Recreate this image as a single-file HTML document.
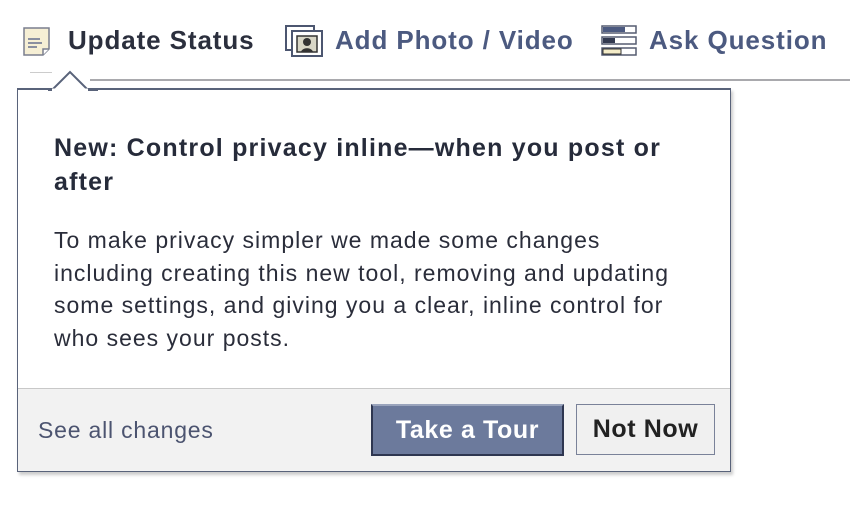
<!DOCTYPE html>
<html><head><style>
body{margin:0;width:850px;height:509px;background:#fff;position:relative;overflow:hidden;font-family:"Liberation Sans",Arial,sans-serif;}
.t{position:absolute;font-weight:bold;font-size:26px;top:25px;white-space:nowrap;letter-spacing:0.9px}
.pop{position:absolute;left:17px;top:88px;width:714px;height:384px;border:1px solid #59637a;border-top:2px solid #59637a;background:#fff;box-shadow:2px 3px 3px #ccc;box-sizing:border-box}
.foot{position:absolute;left:0;right:0;bottom:0;height:82px;background:#f2f2f2;border-top:1px solid #c8c8c8}
.h{position:absolute;left:36px;top:41px;font-weight:bold;font-size:25px;line-height:34px;color:#262b3a;white-space:nowrap;letter-spacing:1.2px}
.b{position:absolute;left:36px;top:134px;font-size:23px;line-height:32.5px;color:#2a2d3a;white-space:nowrap;letter-spacing:1px}
.btn{position:absolute;font-weight:bold;font-size:25px;text-align:center;box-sizing:border-box;letter-spacing:0.6px}
</style></head><body>
<svg style="position:absolute;left:22px;top:25px" width="32" height="33" viewBox="0 0 32 33">
<path d="M2 3h25v21l-6 6H2z" fill="#f6efd5" stroke="#7a7f8e" stroke-width="1.5"/>
<path d="M6 14h12M6 18h14M6 22h9" stroke="#8a8fa0" stroke-width="2"/>
<path d="M21 30v-6h6" fill="#fff" stroke="#7a7f8e" stroke-width="1.5"/>
</svg>
<div class="t" style="left:68px;color:#2b2f3d">Update Status</div>
<svg style="position:absolute;left:284px;top:24px" width="40" height="34" viewBox="0 0 40 34">
<rect x="2" y="2" width="28" height="24" fill="#fff" stroke="#4c5670" stroke-width="2"/>
<rect x="8" y="7" width="30" height="25" fill="#fff" stroke="#4c5670" stroke-width="2"/>
<rect x="13" y="12" width="20" height="16" fill="#d8d6c6" stroke="#333" stroke-width="1.5"/>
<circle cx="23" cy="18" r="4" fill="#333"/><path d="M17 28c1-5 11-5 12 0z" fill="#333"/>
</svg>
<div class="t" style="left:335px;color:#4c5a80">Add Photo / Video</div>
<svg style="position:absolute;left:601px;top:24px" width="36" height="34" viewBox="0 0 36 34">
<rect x="1" y="2" width="34" height="7" fill="#fff" stroke="#555c70" stroke-width="1.5"/><rect x="2" y="3" width="22" height="5" fill="#4c5a80"/>
<rect x="1" y="13" width="34" height="7" fill="#fff" stroke="#555c70" stroke-width="1.5"/><rect x="2" y="14" width="12" height="5" fill="#333a50"/>
<rect x="1" y="24" width="34" height="7" fill="#fff" stroke="#555c70" stroke-width="1.5"/><rect x="2" y="25" width="18" height="5" fill="#f4ecc8" stroke="#333" stroke-width="1"/>
</svg>
<div class="t" style="left:649px;color:#4c5a80">Ask Question</div>
<div style="position:absolute;left:90px;top:79px;width:760px;height:2px;background:#a9a9ad"></div>
<div class="pop">
 <div class="h">New: Control privacy inline—when you post or<br>after</div>
 <div class="b">To make privacy simpler we made some changes<br>including creating this new tool, removing and updating<br>some settings, and giving you a clear, inline control for<br>who sees your posts.</div>
 <div class="foot">
  <div style="position:absolute;left:20px;top:28px;font-size:23px;color:#4c5470;letter-spacing:0.8px">See all changes</div>
  <div class="btn" style="left:353px;top:15px;width:193px;height:52px;background:#6c7a9c;border:2px solid #2e3650;border-top-color:#9aa4bc;color:#fff;line-height:48px">Take a Tour</div>
  <div class="btn" style="left:558px;top:15px;width:139px;height:51px;background:#f0f0f0;border:1px solid #7a8299;color:#222;line-height:49px">Not Now</div>
 </div>
</div>
<svg style="position:absolute;left:48px;top:68px" width="50" height="24" viewBox="0 0 50 24">
<path d="M0 22h4L22 4 40 22h10" fill="#fff" stroke="#59637a" stroke-width="2"/>
<path d="M4 22h36" stroke="#fff" stroke-width="3"/>
</svg>
<div style="position:absolute;left:30px;top:72px;width:22px;height:14px;border-top:1px solid #ccc"></div>
</body></html>
